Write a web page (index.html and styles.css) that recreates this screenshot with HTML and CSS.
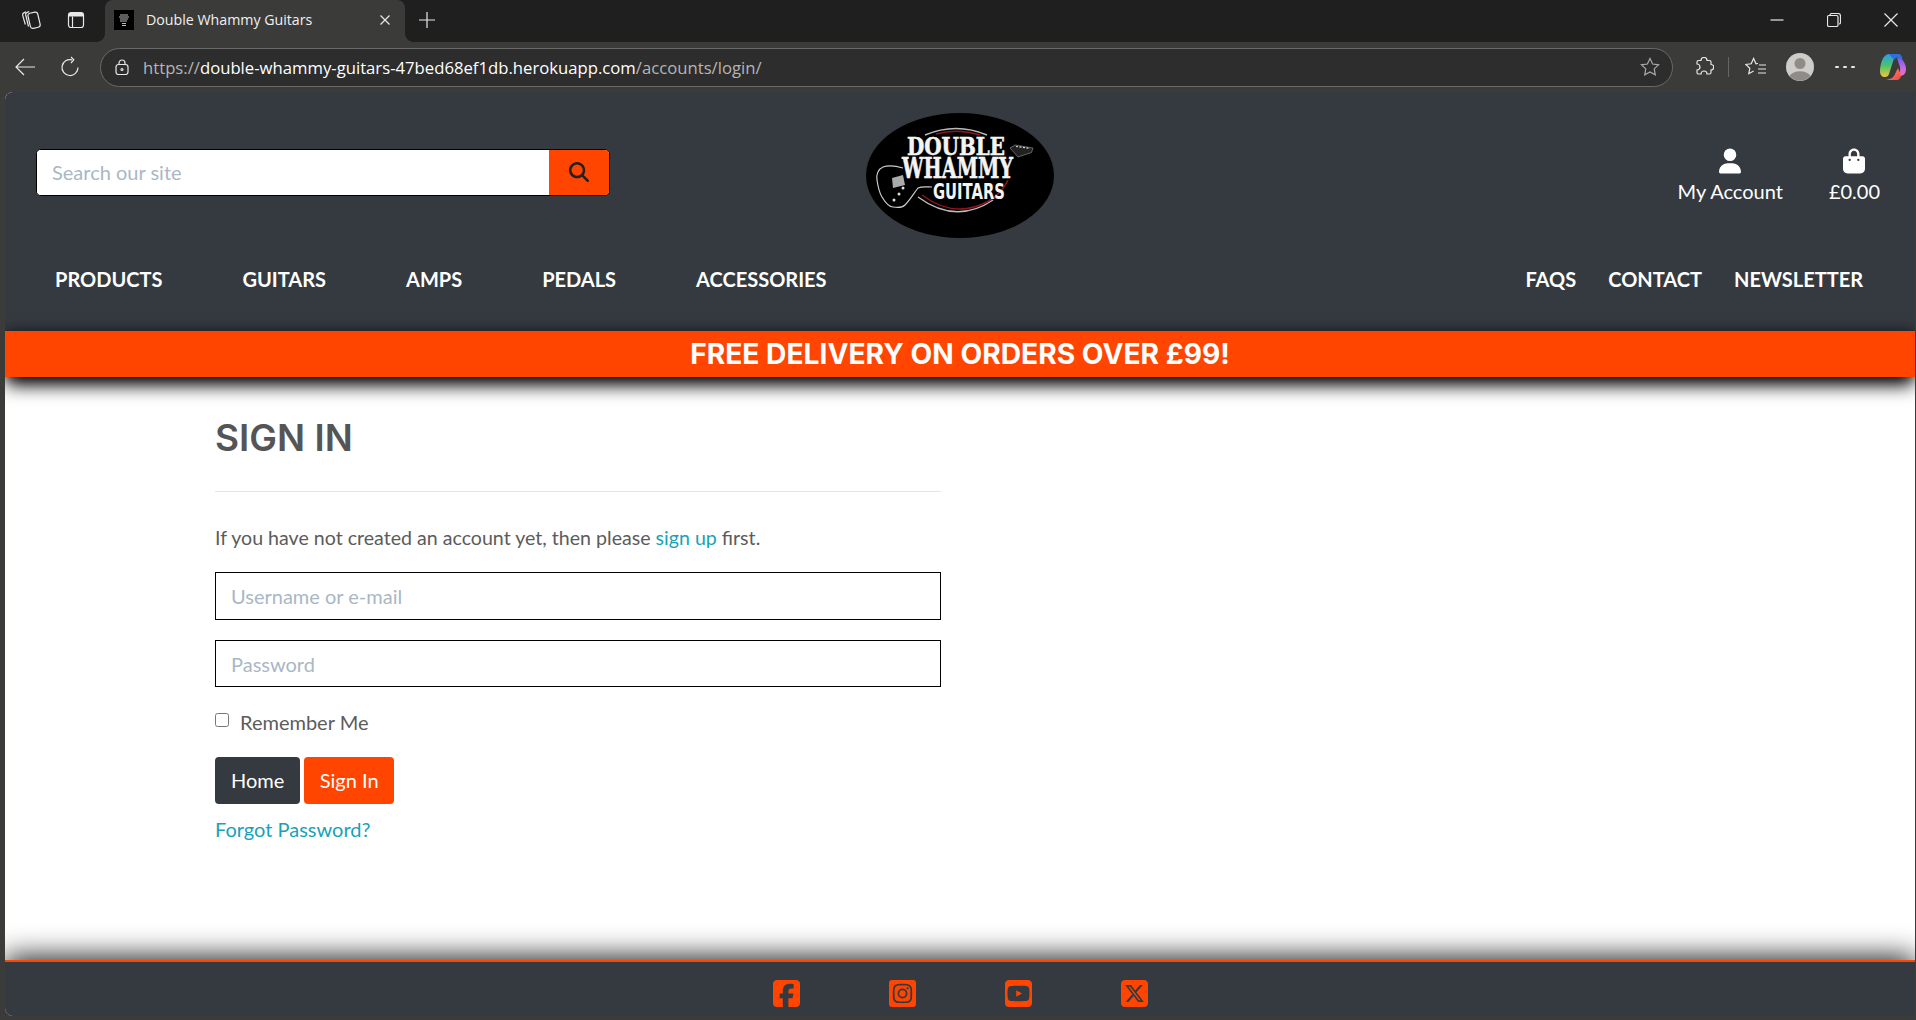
FILE: index.html
```html
<!DOCTYPE html>
<html lang="en">
<head>
    <meta charset="UTF-8">
    <meta name="viewport" content="width=device-width, initial-scale=1.0">
    <title>Double Whammy Guitars</title>
    <link rel="stylesheet" href="styles.css">
</head>
<body>
    <div class="tabstrip">
        <div class="strip-left">
            <svg class="ico" width="22" height="22" viewBox="0 0 22 22"><rect x="9" y="3.500" width="10" height="15.500" rx="2.500" transform="rotate(-13 14 11)" /><path d="M9.200 2.500 6.800 3.600C5.800 4 5.400 5 5.700 6l2.800 11.500M6 2.800 3.800 3.900C2.800 4.400 2.400 5.300 2.700 6.300L5.300 15.500" /></svg>
            <svg class="ico" width="20" height="20" viewBox="0 0 20 20"><rect x="2.500" y="2.500" width="15" height="15" rx="2.500" /><path d="M6.500 6.500V17.500" /><path class="ico-fill" d="M3 3h14v3.500H3z" /></svg>
        </div>
        <div class="tab">
            <span class="favicon">
                <svg width="14" height="14" viewBox="0 0 14 14"><path d="M3 2h8M2 4h10M3 6h8M3 8h7M5 10.500h4M5 12.500h4" class="fav-lines" /></svg>
            </span>
            <span class="tab-title">Double Whammy Guitars</span>
            <svg class="ico tab-close" width="12" height="12" viewBox="0 0 12 12"><path d="M1.500 1.500l9 9M10.500 1.500l-9 9" /></svg>
        </div>
        <svg class="ico new-tab" width="18" height="18" viewBox="0 0 18 18"><path d="M9 1v16M1 9h16" /></svg>
        <div class="window-btns">
            <svg class="ico" width="14" height="14" viewBox="0 0 14 14"><path d="M.5 7h13" /></svg>
            <svg class="ico" width="14" height="14" viewBox="0 0 14 14"><rect x=".5" y="2.500" width="10.500" height="11" rx="1.500" /><path d="M3 2.500c0-1.200.6-2 1.800-2H11c1.500 0 2.500 1 2.500 2.500v6.500c0 .8-.6 1.500-1.500 1.500" /></svg>
            <svg class="ico" width="14" height="14" viewBox="0 0 14 14"><path d="M.5.5l13 13M13.500.5l-13 13" /></svg>
        </div>
    </div>

    <div class="toolbar">
        <svg class="ico" width="22" height="20" viewBox="0 0 22 20"><path d="M21 10H2M10 2l-8 8 8 8" /></svg>
        <svg class="ico reload" width="20" height="22" viewBox="0 0 20 22"><path d="M12 3.800a8 8 0 1 0 6 7.700M11 1l2.800 2.800L11 7" /></svg>
        <div class="urlbar">
            <span class="lock">
                <svg class="ico" width="14" height="16" viewBox="0 0 14 16"><rect x="1" y="5.500" width="12" height="10" rx="2.500" /><path d="M4 5.500V4a3 3 0 0 1 6 0v1.500" /><circle cx="7" cy="10.500" r="1" /></svg>
            </span>
            <span class="url"><span class="url-dim">https://</span>double-whammy-guitars-47bed68ef1db.herokuapp.com<span class="url-dim">/accounts/login/</span></span>
            <svg class="ico dim" width="20" height="20" viewBox="0 0 20 20"><path d="M10 1.500l2.600 5.500 6 .8-4.400 4.100 1.100 6L10 15l-5.300 2.900 1.100-6L1.400 7.800l6-.8z" /></svg>
        </div>
        <div class="tool-right">
            <svg class="ico puzzle" width="20" height="20" viewBox="0 0 20 20"><path d="M7 3.500a3 3 0 0 1 6 0h2.500c.8 0 1.500.7 1.500 1.500v2.500a2.700 2.700 0 0 1 0 5.500v2.500c0 .8-.7 1.500-1.500 1.500H13a3 3 0 0 0-6 0H4.500c-.8 0-1.500-.7-1.500-1.500V13a3 3 0 0 0 0-6V5c0-.8.7-1.500 1.500-1.500z" /></svg>
            <span class="tool-sep"></span>
            <svg class="ico fav" width="22" height="20" viewBox="0 0 22 20"><path d="M13 6.500 11 6.800 8.600 1.500 6.200 6.800.8 7.500l4 3.800-1 5.400 4.800-2.700M14 8h7M13 12h8M13 16h8" /></svg>
            <svg class="avatar" width="28" height="28" viewBox="0 0 28 28"><circle cx="14" cy="14" r="14" fill="#cfcdc9" /><circle cx="14" cy="10.500" r="5.500" fill="#8f8c88" /><path d="M3.500 23a12 9 0 0 1 21 0 14 14 0 0 1-21 0z" fill="#8f8c88" /></svg>
            <span class="dots"><i></i><i></i><i></i></span>
            <svg class="copilot" width="28" height="28" viewBox="0 0 28 28">
                <defs>
                    <linearGradient id="cpa" x1="0" y1="0" x2="0" y2="1"><stop offset="0" stop-color="#2f9be8" /><stop offset=".5" stop-color="#49c46a" /><stop offset="1" stop-color="#f5c43c" /></linearGradient>
                    <linearGradient id="cpb" x1="0" y1="0" x2="0" y2="1"><stop offset="0" stop-color="#6d5de8" /><stop offset=".6" stop-color="#c96ae0" /><stop offset="1" stop-color="#ef6fa5" /></linearGradient>
                    <linearGradient id="cpc" x1="0" y1="0" x2="1" y2="1"><stop offset="0" stop-color="#f5a142" /><stop offset="1" stop-color="#ee3f52" /></linearGradient>
                </defs>
                <path d="M10 1h9c-2.500 1-3.500 3-4.500 6L10 21c-.6 2-2 3-4 3-3 0-5-2-5-6 0-7 3-17 9-17z" fill="url(#cpa)" />
                <path d="M18 5c2-1 4 0 5 1.500C25.500 9 27 13 27 16c0 5-3 7-6 7h-4l3-3c1-1 1.500-3 1-6z" fill="url(#cpb)" />
                <path d="M7 27h11c2 0 3.500-1.500 4-4l-3-8-4 8c-1 2-4 3-8 4z" fill="url(#cpc)" />
                <path d="M10 1h9c3 0 4 2 4.500 5.500L20 5c-2-1-4 0-5 2z" fill="#2d6fe0" />
            </svg>
        </div>
    </div>

    <div class="page">
        <header class="site-header">
            <div class="head-row">
                <form class="search">
                    <input class="search-input" type="text" placeholder="Search our site">
                    <button class="search-btn" type="button">
                        <svg width="20" height="20" viewBox="0 0 512 512"><path d="M416 208c0 45.900-14.900 88.300-40 122.700L502.600 457.400c12.500 12.500 12.500 32.800 0 45.300s-32.800 12.500-45.300 0L330.700 376c-34.400 25.200-76.800 40-122.700 40C93.100 416 0 322.900 0 208S93.100 0 208 0S416 93.100 416 208zM208 352a144 144 0 1 0 0-288 144 144 0 1 0 0 288z" /></svg>
                    </button>
                </form>
                <a class="logo" href="#">
                    <svg width="188" height="125" viewBox="0 0 188 125">
                        <ellipse cx="94" cy="62.500" rx="94" ry="62.500" fill="#000" />
                        <path d="M59 22Q90 9 121 22" fill="none" stroke="#bbb" stroke-width="1.500" />
                        <path d="M70 21Q92 15 114 22" fill="none" stroke="#8c1520" stroke-width="1.500" />
                        <path d="M52 84Q90 112 127 87" fill="none" stroke="#bbb" stroke-width="1.500" />
                        <path d="M56 82Q88 106 121 89C130 84 138 76 142 67" fill="none" stroke="#8c1520" stroke-width="1.500" />
                        <path d="M37 55C30 53 23 52 17 54 12 56 10 62 11 67 12 74 13 79 16 84 19 89 23 94 27 94 33 95 37 94 39 92 44 87 48 80 52 75 56 73 61 74 66 74" fill="none" stroke="#ccc" stroke-width="1.200" />
                        <path d="M26 65l11-3 2 10-12 3z" fill="#aaa" />
                        <circle cx="37" cy="75" r="1.500" fill="#ddd" /><circle cx="33" cy="81" r="1.500" fill="#ddd" /><circle cx="28" cy="87" r="1.500" fill="#ddd" />
                        <path d="M144 35l5-3 18 3-1.500 4.500L152 44z" fill="#222" stroke="#999" stroke-width=".6" />
                        <path d="M150 33.500l14 1.800" stroke="#ddd" stroke-width="1.200" stroke-dasharray="2 1.500" />
                        <text class="logo-serif" x="41" y="42" font-size="25" textLength="98" lengthAdjust="spacingAndGlyphs">DOUBLE</text>
                        <text class="logo-serif" x="36" y="65" font-size="27" textLength="111" lengthAdjust="spacingAndGlyphs">WHAMMY</text>
                        <text class="logo-sans" x="67" y="86" font-size="21" textLength="72" lengthAdjust="spacingAndGlyphs">GUITARS</text>
                    </svg>
                </a>
                <div class="head-links">
                    <a class="head-link" href="#">
                        <svg width="22" height="26" viewBox="0 0 448 512"><path d="M224 256A128 128 0 1 0 224 0a128 128 0 1 0 0 256zm-45.700 48C79.800 304 0 383.800 0 482.300C0 498.700 13.300 512 29.700 512H418.300c16.400 0 29.700-13.300 29.700-29.700C448 383.800 368.200 304 269.700 304H178.300z" /></svg>
                        <span>My Account</span>
                    </a>
                    <a class="head-link" href="#">
                        <svg width="22" height="26" viewBox="0 0 448 512"><path d="M160 112c0-35.300 28.700-64 64-64s64 28.700 64 64v48H160V112zm-48 48H48c-26.500 0-48 21.500-48 48V416c0 53 43 96 96 96H352c53 0 96-43 96-96V208c0-26.500-21.500-48-48-48H336V112C336 50.100 285.900 0 224 0S112 50.100 112 112v48zm24 48a24 24 0 1 1 0 48 24 24 0 1 1 0-48zm152 24a24 24 0 1 1 48 0 24 24 0 1 1-48 0z" /></svg>
                        <span>£0.00</span>
                    </a>
                </div>
            </div>
            <nav class="main-nav">
                <div class="nav-left">
                    <a href="#">PRODUCTS</a>
                    <a href="#">GUITARS</a>
                    <a href="#">AMPS</a>
                    <a href="#">PEDALS</a>
                    <a href="#">ACCESSORIES</a>
                </div>
                <div class="nav-right">
                    <a href="#">FAQS</a>
                    <a href="#">CONTACT</a>
                    <a href="#">NEWSLETTER</a>
                </div>
            </nav>
        </header>

        <div class="banner">FREE DELIVERY ON ORDERS OVER £99!</div>

        <main class="content">
            <h1 class="title">SIGN IN</h1>
            <hr class="rule">
            <p class="intro">If you have not created an account yet, then please <a href="#">sign up</a> first.</p>
            <form class="login-form">
                <input class="field" type="text" placeholder="Username or e-mail">
                <input class="field" type="password" placeholder="Password">
                <label class="remember"><input type="checkbox"> Remember Me</label>
                <div class="actions">
                    <a class="btn btn-dark" href="#">Home</a>
                    <button class="btn btn-orange" type="button">Sign In</button>
                </div>
                <a class="forgot" href="#">Forgot Password?</a>
            </form>
        </main>

        <footer class="site-footer">
            <a href="#"><svg width="27" height="31" viewBox="0 0 448 512"><path d="M64 32C28.700 32 0 60.700 0 96V416c0 35.300 28.700 64 64 64h98.200V334.200H109.400V256h52.800V222.300c0-87.100 39.400-127.400 125-127.400c16.200 0 44.200 3.200 55.700 6.400V172c-6-.6-16.500-1-29.600-1c-42 0-58.200 15.900-58.200 57.200V256h83.600l-14.400 78.200H255V480H384c35.300 0 64-28.700 64-64V96c0-35.300-28.700-64-64-64H64z" /></svg></a>
            <a href="#"><svg width="27" height="31" viewBox="0 0 448 512"><path d="M224,202.660A53.340,53.340,0,1,0,277.360,256,53.380,53.380,0,0,0,224,202.660Zm124.710-41a54,54,0,0,0-30.410-30.410c-21-8.290-71-6.430-94.300-6.430s-73.250-1.930-94.310,6.430a54,54,0,0,0-30.410,30.410c-8.280,21-6.430,71.050-6.430,94.330S91,329.260,99.320,350.330a54,54,0,0,0,30.410,30.410c21,8.290,71,6.430,94.310,6.430s73.240,1.930,94.300-6.430a54,54,0,0,0,30.410-30.410c8.350-21,6.430-71.050,6.430-94.330S357.100,182.740,348.750,161.670ZM224,338a82,82,0,1,1,82-82A81.900,81.900,0,0,1,224,338Zm85.380-148.300a19.140,19.140,0,1,1,19.130-19.140A19.100,19.100,0,0,1,309.420,189.740ZM400,32H48A48,48,0,0,0,0,80V432a48,48,0,0,0,48,48H400a48,48,0,0,0,48-48V80A48,48,0,0,0,400,32ZM382.880,322c-1.290,25.630-7.140,48.340-25.850,67s-41.400,24.630-67,25.850c-26.410,1.490-105.590,1.490-132,0-25.630-1.290-48.260-7.150-67-25.850s-24.630-41.420-25.850-67c-1.490-26.420-1.490-105.610,0-132,1.290-25.630,7.070-48.340,25.850-67s41.470-24.560,67-25.780c26.410-1.490,105.590-1.490,132,0,25.630,1.290,48.330,7.150,67,25.850s24.630,41.420,25.850,67.050C384.370,216.440,384.370,295.560,382.880,322Z" /></svg></a>
            <a href="#"><svg width="27" height="31" viewBox="0 0 448 512"><path d="M282 256.200l-95.200-54.100V310.300L282 256.200zM384 32H64C28.700 32 0 60.700 0 96V416c0 35.300 28.700 64 64 64H384c35.300 0 64-28.700 64-64V96c0-35.300-28.700-64-64-64zm14.400 136.100c7.600 28.600 7.600 88.200 7.600 88.200s0 59.600-7.600 88.100c-4.200 15.800-16.500 27.700-32.200 31.900C337.900 384 224 384 224 384s-113.900 0-142.200-7.600c-15.700-4.200-28-16.100-32.200-31.900C42 315.900 42 256.300 42 256.300s0-59.700 7.600-88.200c4.200-15.800 16.500-28.200 32.200-32.400C110.100 128 224 128 224 128s113.900 0 142.200 7.700c15.700 4.200 28 16.600 32.200 32.400z" /></svg></a>
            <a href="#"><svg width="27" height="31" viewBox="0 0 448 512"><path d="M64 32C28.700 32 0 60.700 0 96V416c0 35.300 28.700 64 64 64H384c35.300 0 64-28.700 64-64V96c0-35.300-28.700-64-64-64H64zm297.100 84L257.300 234.600 379.400 396H283.800L209 298.100 123.300 396H75.800l111-126.900L69.700 116h98l67.700 89.500L313.600 116h47.500zM323.300 367.600L153.400 142.400H125.100L296.900 367.600h26.400z" /></svg></a>
        </footer>
    </div>
</body>
</html>
```

FILE: styles.css
```css
* { box-sizing: border-box; }
html, body { height: 100%; }
body { margin: 0; background: #3b3b3a; font-family: "Lato", sans-serif; overflow: hidden; display: flex; flex-direction: column; }
a { text-decoration: none; color: inherit; }

/* browser frame */
.ico { fill: none; stroke: #e8e8e8; stroke-width: 1.2; flex: none; }
.ico-fill { fill: #e8e8e8; stroke: none; }
.ico.dim { stroke: #a8a8a8; }
.tabstrip { height: 42px; flex: none; background: #1f1f1f; display: flex; align-items: center; padding-bottom: 2px; }
.strip-left { width: 105px; padding-left: 20px; display: flex; align-items: center; gap: 24px; flex: none; }
.tab { width: 300px; height: 42px; margin-bottom: -2px; padding-bottom: 3px; flex: none; background: #3b3b3a; border-radius: 8px 8px 0 0; display: flex; align-items: center; padding-left: 9px; position: relative; }
.tab::before, .tab::after { content: ""; position: absolute; bottom: 0; width: 8px; height: 8px; }
.tab::before { left: -8px; background: radial-gradient(circle at 0 0, #1f1f1f 7.500px, #3b3b3a 8px); }
.tab::after { right: -8px; background: radial-gradient(circle at 100% 0, #1f1f1f 7.500px, #3b3b3a 8px); }
.favicon { width: 20px; height: 20px; background: #000; display: flex; align-items: center; justify-content: center; flex: none; }
.fav-lines { stroke: #bbb; stroke-width: 1; fill: none; }
.tab-title { margin-left: 12px; font-family: "Open Sans", sans-serif; font-size: 14.200px; color: #f0f0f0; white-space: nowrap; flex: 1; }
.tab-close { margin-right: 14px; }
.new-tab { margin-left: 13px; }
.window-btns { margin-left: auto; display: flex; gap: 43px; padding-right: 18px; }
.toolbar { height: 50px; flex: none; background: #3b3b3a; display: flex; align-items: center; padding-left: 14px; }
.reload { margin-left: 24px; }
.urlbar { width: 1573px; height: 39px; margin-left: 20px; flex: none; background: #2d2d2d; border: 1px solid #6a6a6a; border-radius: 20px; display: flex; align-items: center; padding: 0 12px 0 8px; }
.lock { width: 26px; height: 30px; display: flex; align-items: center; justify-content: center; flex: none; }
.url { margin-left: 8px; padding-top: 1px; flex: 1; font-family: "Open Sans", sans-serif; font-size: 16.700px; color: #fff; white-space: nowrap; }
.url-dim { color: #b5b5b5; }
.tool-right { display: flex; align-items: center; margin-left: 21px; }
.tool-sep { width: 1px; height: 20px; background: #666; margin: 0 16px 0 14px; }
.avatar { margin-left: 19px; flex: none; }
.dots { display: flex; gap: 4px; margin-left: 21px; }
.dots i { width: 4px; height: 2px; background: #e8e8e8; border-radius: 1px; }
.copilot { margin-left: 24px; flex: none; }

/* page */
.page { flex: 1; margin: 0 1px 4px 5px; background: #fff; border-radius: 8px 0 0 8px; overflow: hidden; display: flex; flex-direction: column; }
.site-header { background: #343a40; height: 239px; flex: none; color: #fff; }
.head-row { display: grid; grid-template-columns: 1fr auto 1fr; align-items: center; padding: 21px 31px 0; }
.search { display: flex; width: 574px; height: 47px; margin-top: -7px; border: 1px solid #000; border-radius: 5px; overflow: hidden; background: #fff; }
.search-input { flex: 1; min-width: 0; border: 0; outline: 0; padding: 0 15px; font-family: "Lato", sans-serif; font-size: 20px; }
.search-input::placeholder { color: #aab7c4; }
.search-btn { width: 60px; border: 0; padding: 0; background: #ff4500; display: flex; align-items: center; justify-content: center; }
.search-btn svg { fill: #222; }
.logo { display: block; height: 125px; }
.logo svg { display: block; }
.logo-serif { font-family: "DejaVu Serif", serif; font-weight: 700; fill: #f4f4f4; stroke: #f4f4f4; stroke-width: .6; }
.logo-sans { font-family: "DejaVu Sans", sans-serif; font-weight: 700; fill: #f4f4f4; }
.head-links { display: flex; justify-content: flex-end; gap: 46px; padding-right: 4px; }
.head-link { display: flex; flex-direction: column; align-items: center; gap: 5px; font-size: 20px; }
.head-link svg { fill: #fff; display: block; }
.main-nav { display: flex; justify-content: space-between; align-items: center; height: 93px; padding: 0 36px 12px 10px; font-size: 20px; font-weight: 700; }
.nav-left { display: flex; }
.nav-left a { padding: 0 40px; }
.nav-right { display: flex; }
.nav-right a { padding: 0 16px; }
.banner { height: 46px; flex: none; background: #ff4500; color: #fff; font-family: "Inter", sans-serif; font-weight: 700; font-size: 28.200px; line-height: 46px; text-align: center; box-shadow: 0 10px 18px -2px #000, 0 0 12px rgba(0, 0, 0, .5); position: relative; }

.content { flex: 1; padding: 0 0 0 210px; width: 936px; color: #5c5c5c; }
.title { margin: 38px 0 0; font-family: "Inter", sans-serif; font-weight: 600; font-size: 37px; line-height: 46px; color: #555; }
.rule { margin: 30px 0 0; border: 0; border-top: 1px solid #e4e4e4; }
.intro { margin: 32px 0 0; font-size: 19.600px; line-height: 28px; }
.intro a, .forgot { color: #17a2b8; }
.login-form { display: flex; flex-direction: column; align-items: flex-start; }
.field { width: 100%; height: 48px; margin-top: 20px; border: 1px solid #000; padding: 0 15px; font-family: "Lato", sans-serif; font-size: 20px; outline: 0; }
.field + .field { height: 47px; }
.field::placeholder { color: #aab7c4; }
.remember { display: flex; align-items: center; gap: 11px; margin-top: 21px; font-size: 20px; line-height: 28px; }
.remember input { width: 14px; height: 14px; margin: -4px 0 0; }
.actions { display: flex; gap: 4px; margin-top: 21px; }
.btn { display: block; height: 47px; padding: 0 16px; border: 0; border-radius: 4px; font-family: "Lato", sans-serif; font-size: 20px; line-height: 47px; color: #fff; }
.btn-dark { background: #343a40; }
.btn-orange { background: #ff4500; padding: 0 15.500px; }
.forgot { margin-top: 11px; font-size: 20px; line-height: 28px; }

.site-footer { flex: none; height: 56px; padding-top: 9px; background: #343a40; border-top: 2px solid #ff4500; box-shadow: 0 -4px 28px rgba(0, 0, 0, .85); display: flex; align-items: center; justify-content: center; gap: 89px; position: relative; }
.site-footer svg { fill: #ff4500; display: block; }
```
